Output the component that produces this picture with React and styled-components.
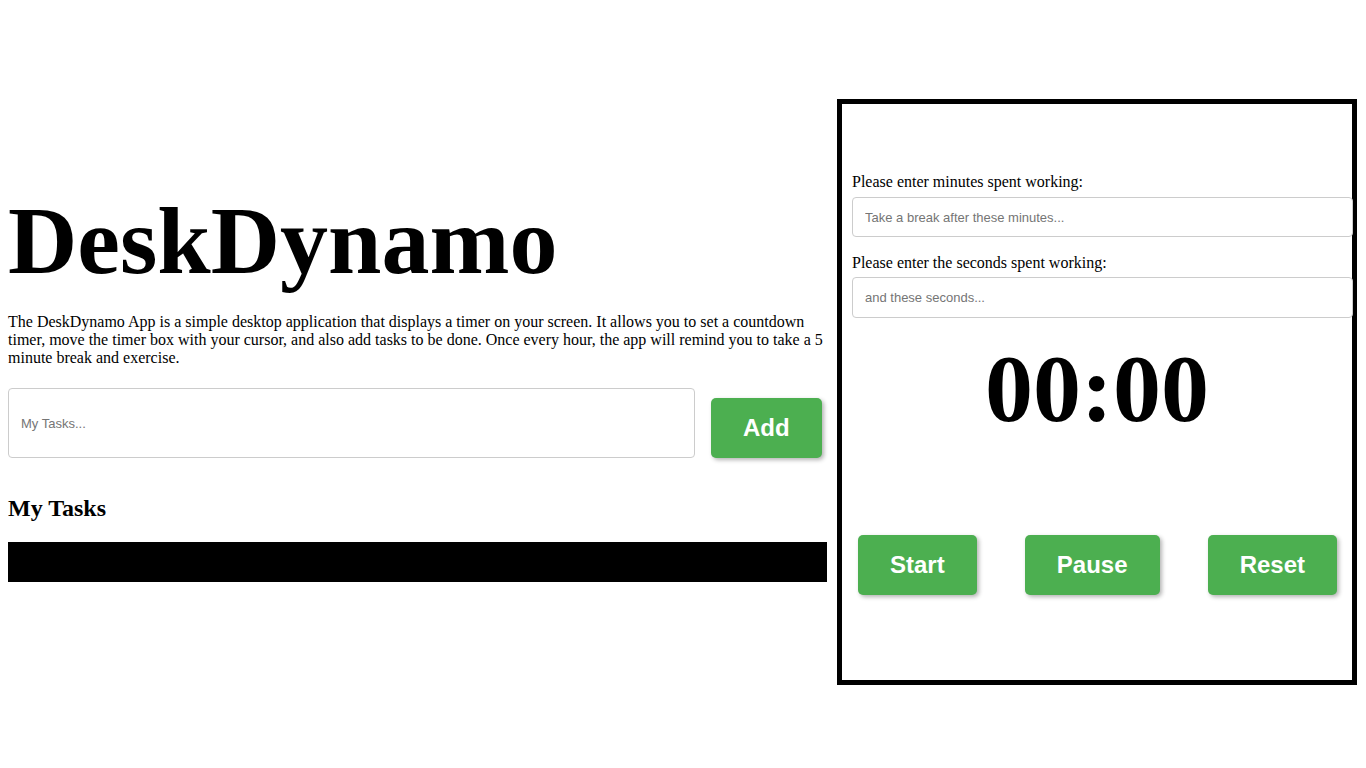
import React from "react";
import styled, { createGlobalStyle } from "styled-components";

const GlobalStyle = createGlobalStyle`
  html, body { background: #ffffff; }
  body {
    margin: 8px;
    font-family: "Liberation Serif", "Times New Roman", serif;
    color: #000;
  }
`;

const Page = styled.div`
  display: flex;
  align-items: flex-start;
`;

const LeftColumn = styled.section`
  width: 819px;
  margin-top: 177px;
  display: flex;
  flex-direction: column;
`;

const Title = styled.h1`
  margin: 0 0 17px;
  font-size: 96px;
  font-weight: bold;
  line-height: normal;
`;

const Description = styled.p`
  margin: 0 0 21px;
  font-size: 16px;
  line-height: normal;
`;

const TaskForm = styled.div`
  display: flex;
  align-items: flex-end;
  gap: 16px;
`;

const Input = styled.input`
  box-sizing: border-box;
  width: ${(p) => p.$width};
  height: ${(p) => p.$height};
  padding: 0 12px;
  border: 1px solid #ccc;
  border-radius: 4px;
  font-family: "Liberation Sans", Arial, sans-serif;
  font-size: 13px;
  color: #000;
  background: #fff;
  outline: none;
  &::placeholder { color: #757575; }
`;

const GreenButton = styled.button`
  height: 60px;
  padding: 0 32px;
  border: none;
  border-radius: 5px;
  background: #4caf50;
  color: #fff;
  font-family: "Liberation Sans", Arial, sans-serif;
  font-weight: bold;
  font-size: 24px;
  box-shadow: 2px 2px 4px rgba(0, 0, 0, 0.3);
  cursor: pointer;
`;

const SectionTitle = styled.h2`
  margin: 37px 0 20px;
  font-size: 24px;
  font-weight: bold;
  line-height: normal;
`;

const TaskList = styled.ul`
  margin: 0;
  padding: 0;
  height: 40px;
  background: #000;
  list-style: none;
`;

const TimerBox = styled.aside`
  box-sizing: border-box;
  width: 520px;
  height: 586px;
  margin: 91px 0 0 10px;
  border: 5px solid #000;
  padding: 69px 0 0 10px;
  display: flex;
  flex-direction: column;
`;

const FieldLabel = styled.label`
  display: block;
  font-size: 16px;
  line-height: normal;
  margin-top: ${(p) => p.$top || "0px"};
  margin-bottom: ${(p) => p.$bottom || "0px"};
`;

const TimeDisplay = styled.div`
  margin: 15px 0 0 -10px;
  text-align: center;
  font-size: 96px;
  font-weight: bold;
  line-height: normal;
`;

const ButtonRow = styled.div`
  display: flex;
  justify-content: space-between;
  margin: 91px 0 0 -10px;
  padding: 0 15px 0 16px;
`;

export default function App() {
  return (
    <>
      <GlobalStyle />
      <Page>
        <LeftColumn>
          <Title>DeskDynamo</Title>
          <Description>
            The DeskDynamo App is a simple desktop application that displays a timer on your screen. It allows you to set a countdown timer, move the timer box with your cursor, and also add tasks to be done. Once every hour, the app will remind you to take a 5 minute break and exercise.
          </Description>
          <TaskForm>
            <Input $width="687px" $height="70px" placeholder="My Tasks..." />
            <GreenButton>Add</GreenButton>
          </TaskForm>
          <SectionTitle>My Tasks</SectionTitle>
          <TaskList />
        </LeftColumn>
        <TimerBox>
          <FieldLabel $bottom="6px">Please enter minutes spent working:</FieldLabel>
          <Input $width="501px" $height="40px" placeholder="Take a break after these minutes..." />
          <FieldLabel $top="17px" $bottom="5px">Please enter the seconds spent working:</FieldLabel>
          <Input $width="501px" $height="41px" placeholder="and these seconds..." />
          <TimeDisplay>00:00</TimeDisplay>
          <ButtonRow>
            <GreenButton>Start</GreenButton>
            <GreenButton>Pause</GreenButton>
            <GreenButton>Reset</GreenButton>
          </ButtonRow>
        </TimerBox>
      </Page>
    </>
  );
}
